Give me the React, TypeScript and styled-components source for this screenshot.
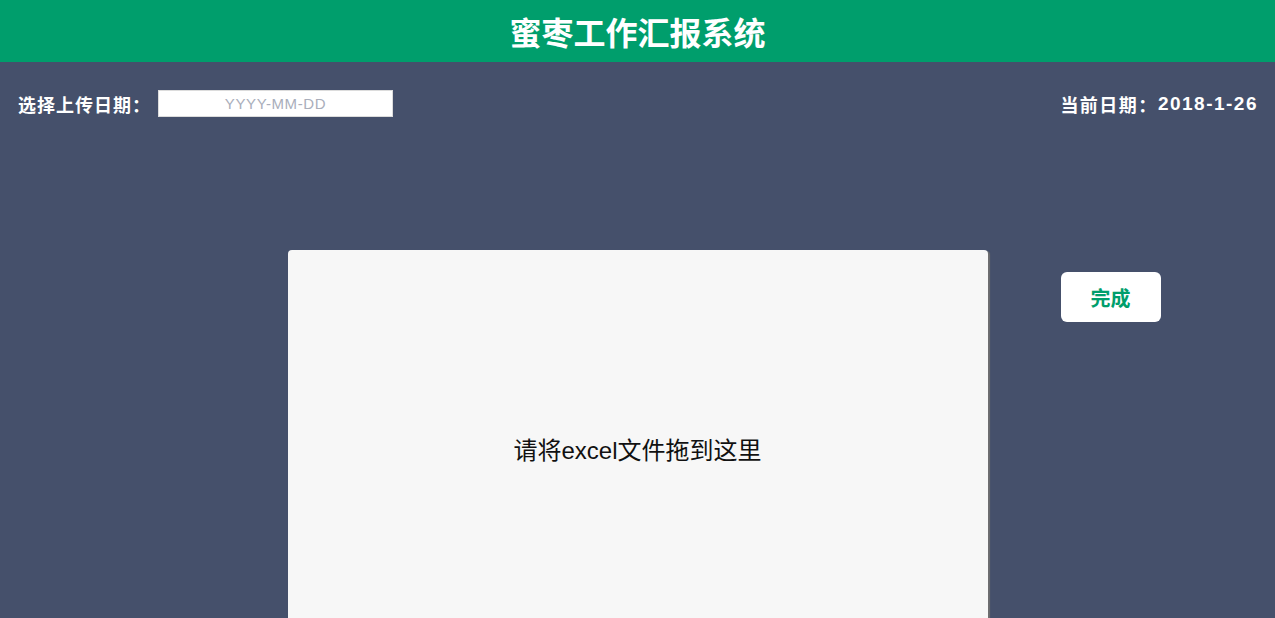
import styled, { createGlobalStyle } from 'styled-components';

const GlobalStyle = createGlobalStyle`
  html, body {
    margin: 0;
    padding: 0;
    background-color: #45506b;
    font-family: 'Liberation Sans', 'Noto Sans CJK SC', sans-serif;
  }
`;

const Page = styled.div`
  min-height: 618px;
  overflow: hidden;
  background-color: #45506b;
`;

const Header = styled.header`
  height: 62px;
  background-color: #009e6c;
  display: flex;
  justify-content: center;
  align-items: center;
`;

const Title = styled.h1`
  margin: 0;
  color: #fff;
  font-size: 32px;
  font-weight: 700;
`;

const TopBar = styled.div`
  display: flex;
  justify-content: space-between;
  align-items: center;
  padding: 28px 17px 0 18px;
  height: 27px;
  color: #fff;
  font-size: 18px;
`;

const Field = styled.div`
  display: flex;
  align-items: center;
  gap: 7px;
`;

const Label = styled.span<{ $spacing?: number }>`
  font-weight: 700;
  letter-spacing: ${(p) => p.$spacing ?? 1}px;
`;

const DateInput = styled.input`
  box-sizing: border-box;
  width: 235px;
  height: 27px;
  border: 1px solid #dcdcdc;
  background: #fff;
  text-align: center;
  font-family: 'Liberation Sans', sans-serif;
  font-size: 15px;
  letter-spacing: 0.6px;
  outline: none;

  &::placeholder {
    color: #a9aebb;
  }
`;

const Today = styled.div`
  display: flex;
  align-items: center;
`;

const DateValue = styled.span`
  font-size: 19px;
  font-weight: 700;
  letter-spacing: 1.5px;
`;

const Main = styled.main`
  display: grid;
  grid-template-columns: 1fr 700px 1fr;
  margin-top: 133px;
`;

const DropZone = styled.div`
  grid-column: 2;
  height: 420px;
  background-color: #f7f7f7;
  border-radius: 4px;
  box-shadow: 2px 1px 1px #6e6e70;
  display: flex;
  justify-content: center;
  align-items: center;
  padding-bottom: 24px;
  box-sizing: border-box;
  font-size: 24px;
  color: #111;
`;

const Side = styled.div`
  grid-column: 3;
  padding: 22px 0 0 73px;
`;

const DoneButton = styled.button`
  width: 100px;
  height: 50px;
  border: none;
  border-radius: 6px;
  background: #fff;
  color: #009e6c;
  font-family: 'Liberation Sans', 'Noto Sans CJK SC', sans-serif;
  font-size: 20px;
  font-weight: 700;
  cursor: pointer;
`;

const App = () => (
  <Page>
    <GlobalStyle />
    <Header>
      <Title>蜜枣工作汇报系统</Title>
    </Header>
    <TopBar>
      <Field>
        <Label>选择上传日期：</Label>
        <DateInput type='text' placeholder='YYYY-MM-DD' />
      </Field>
      <Today>
        <Label $spacing={1.5}>当前日期：</Label>
        <DateValue>2018-1-26</DateValue>
      </Today>
    </TopBar>
    <Main>
      <DropZone>请将excel文件拖到这里</DropZone>
      <Side>
        <DoneButton>完成</DoneButton>
      </Side>
    </Main>
  </Page>
);

export default App;
